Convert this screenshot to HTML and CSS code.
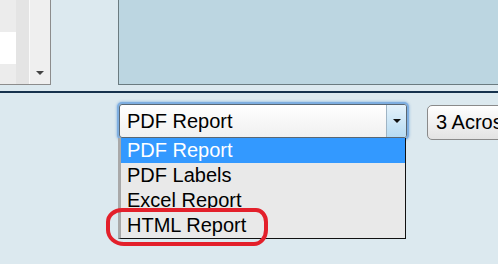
FILE: index.html
```html
<!DOCTYPE html>
<html lang="en">
<head>
  <meta charset="UTF-8" />
  <title>Report Options</title>
  <link rel="stylesheet" href="styles.css">
</head>
<body>
  <div class="top">
    <!-- Left: list box with scrollbar -->
    <div class="listbox">
      <div class="lb-items">
        <div class="lb-gray"></div>
        <div class="lb-white"></div>
      </div>
      <div class="lb-col"></div>
      <div class="lb-scroll"><span class="lb-arrow"></span></div>
    </div>
    <!-- Right: preview panel -->
    <div class="panel"></div>
  </div>

  <div class="rule"></div>

  <div class="controls">
    <div class="picker">
      <div class="select">
        <span class="select-text">PDF Report</span>
        <span class="select-btn"><span class="caret"></span></span>
      </div>
      <ul class="options">
        <li class="active">PDF Report</li>
        <li>PDF Labels</li>
        <li>Excel Report</li>
        <li>HTML Report</li>
      </ul>
      <div class="mark"></div>
    </div>
    <div class="across">3 Across</div>
  </div>
</body>
</html>
```

FILE: styles.css
```css
body { margin: 0; background: #dce9ef; font-family: "Liberation Sans", Arial, sans-serif; width: 498px; height: 264px; overflow: hidden; }

.top { display: flex; height: 85px; gap: 67px; }
.listbox { display: flex; width: 50px; height: 84px; border-right: 1px solid #8c8c8c; border-bottom: 1px solid #8c8c8c; background: #ececec; }
.lb-items { width: 16px; display: flex; flex-direction: column; }
.lb-gray { height: 32px; background: #ececec; }
.lb-white { height: 32px; background: #ffffff; }
.lb-col { width: 13px; background: #e4e4e4; border-right: 1px solid #fafafa; }
.lb-scroll { flex: 1; background: #efefef; display: flex; align-items: flex-end; justify-content: center; padding-bottom: 9px; box-sizing: border-box; }
.lb-arrow { width: 0; height: 0; border-left: 4px solid transparent; border-right: 4px solid transparent; border-top: 4px solid #444; }
.panel { flex: 1; height: 84px; background: #bcd6e1; border-left: 1px solid #6b7b80; border-bottom: 1px solid #6b7b80; }

.rule { height: 2px; background: #16324d; margin-top: 6px; }

.controls { display: flex; align-items: flex-start; padding-left: 119px; padding-top: 11px; gap: 20px; }
.picker { position: relative; width: 288px; }
.select { display: flex; height: 32px; width: 286px; border: 1px solid #596773; border-radius: 3px; background: linear-gradient(#ffffff, #f0f0f0); box-shadow: 0 0 0 2px #7eaee0, 0 0 2px 3px rgba(126,174,224,0.5); }
.select-text { flex: 1; font-size: 20px; line-height: 32px; padding-left: 7px; color: #000; }
.select-btn { width: 19px; border-left: 1px solid #9fb4c4; background: linear-gradient(#e4f2fb, #b7dbf2); display: flex; align-items: center; justify-content: center; border-radius: 0 2px 2px 0; }
.caret { width: 0; height: 0; border-left: 4px solid transparent; border-right: 4px solid transparent; border-top: 4px solid #111; }

.options { list-style: none; margin: 0 0 0 -1px; padding: 0; width: 284px; background: #e9e9e9; border-left: 3px solid #a9a9a9; border-right: 1px solid #111; border-bottom: 1px solid #111; }
.options li { height: 25px; line-height: 25px; font-size: 20px; padding-left: 6px; color: #000; }
.options li.active { background: #3399ff; color: #fff; }

.mark { position: absolute; left: -13px; top: 104px; width: 154px; height: 30px; border: 4px solid #e3202b; border-radius: 16px 12px 14px 18px / 14px 14px 16px 16px; }

.across { height: 33px; padding: 0 10px 0 8px; font-size: 20px; line-height: 33px; border: 1px solid #8a8a8a; border-radius: 5px; background: linear-gradient(#ffffff, #e3e3e3); white-space: nowrap; margin-top: 1px; }
```
